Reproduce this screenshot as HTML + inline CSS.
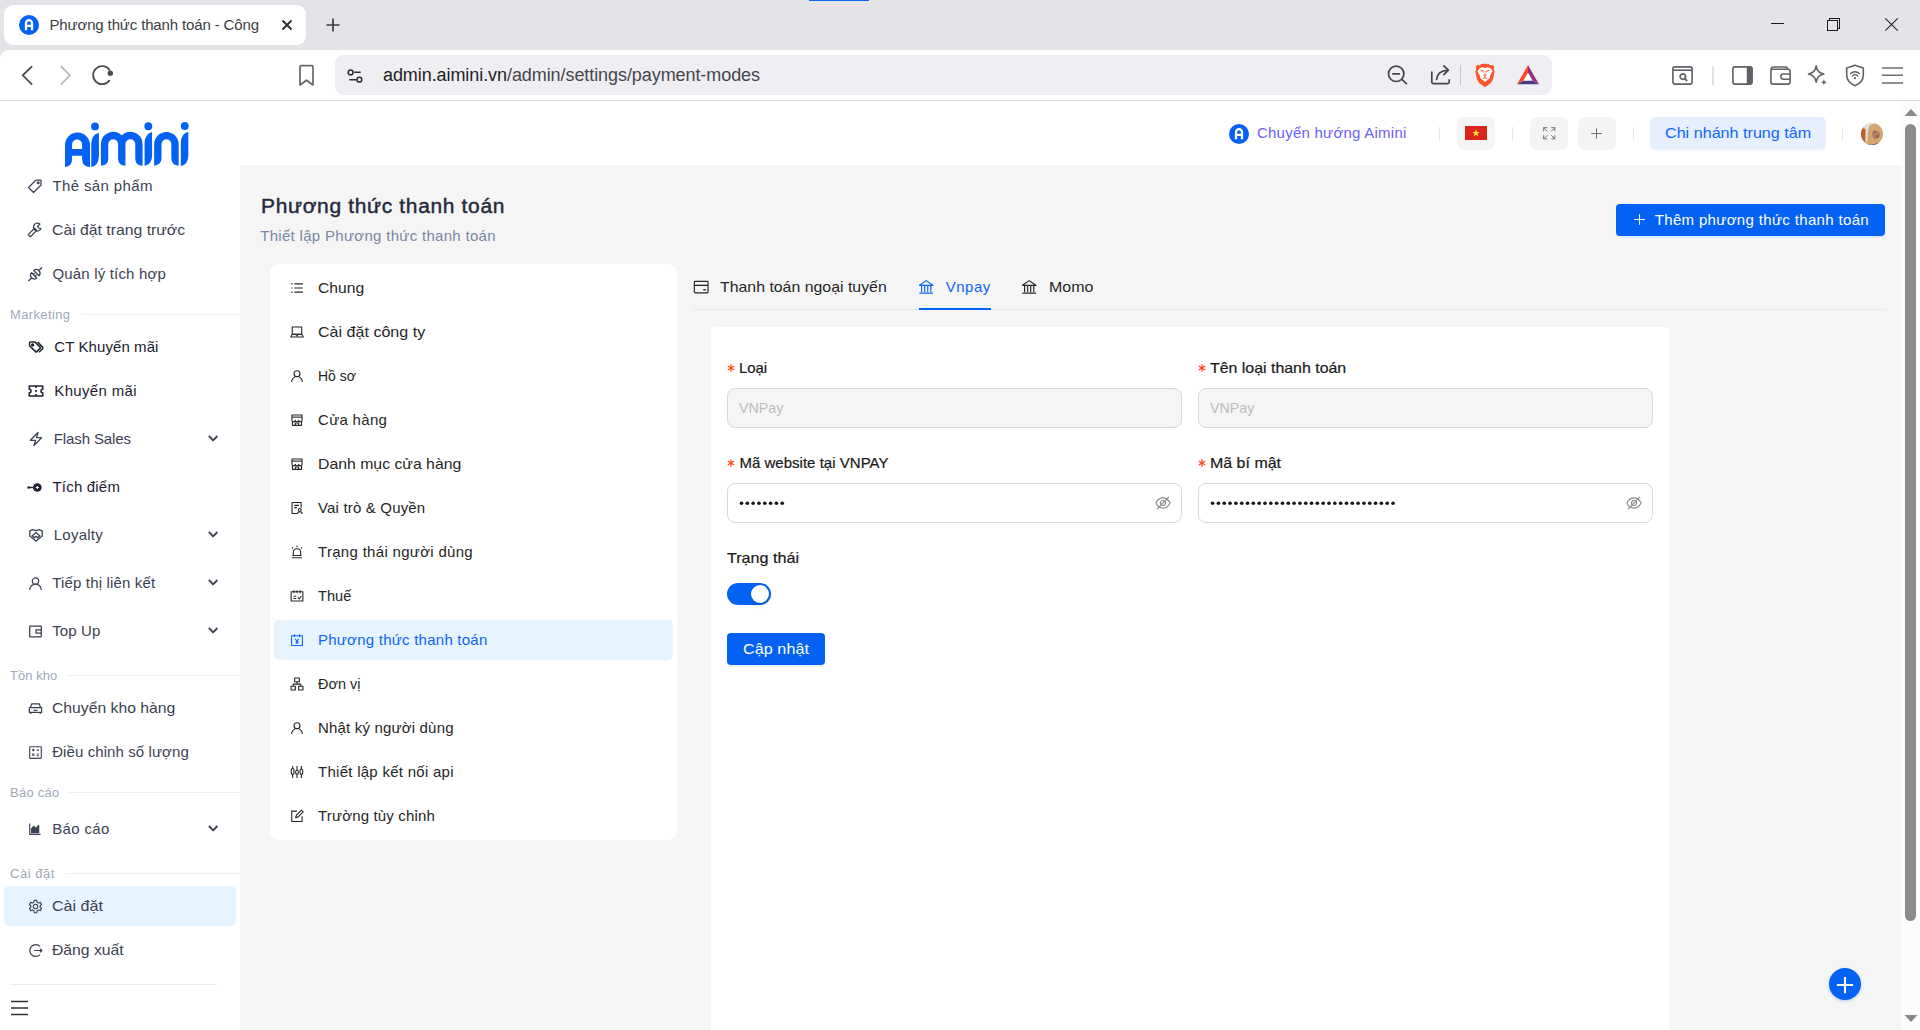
<!DOCTYPE html>
<html lang="vi">
<head>
<meta charset="utf-8">
<title>Phương thức thanh toán</title>
<style>
*{box-sizing:border-box;margin:0;padding:0}
html,body{width:1920px;height:1030px;overflow:hidden;background:#fff}
body{font-family:"Liberation Sans",sans-serif;color:#222;position:relative}
.abs{position:absolute}
.t{position:absolute;white-space:nowrap;line-height:1;transform-origin:0 50%}
svg{position:absolute;overflow:visible}
/* browser chrome */
#tabbar{left:0;top:0;width:1920px;height:62px;background:#e3e3e8}
#tab{left:4px;top:5px;width:302px;height:40px;background:#fff;border-radius:9px}
#toolbar{left:0;top:50px;width:1920px;height:50px;background:#fff;border-radius:9px 0 0 0}
#urlbar{left:335px;top:55px;width:1217px;height:40px;background:#eeeef3;border-radius:9px}
#chromeline{left:0;top:100px;width:1920px;height:1px;background:#dedee3}
/* page */
#sidebar{left:0;top:101px;width:240px;height:929px;background:#fff}
#header{left:240px;top:101px;width:1661px;height:64px;background:#fff}
#main{left:240px;top:165px;width:1661px;height:865px;background:#f5f5f5}
#scroll{left:1901px;top:101px;width:19px;height:929px;background:#fcfcfc}
#thumb{left:1905px;top:124px;width:11px;height:797px;background:#8b8b8b;border-radius:6px}
.sb{font-size:15px;color:#3d4350}
.sec{font-size:13px;color:#9aa1ad}
.secline{height:1px;background:#eeeff2}
.st{font-size:15px;color:#2a2a2a}
.lbl{font-size:15px;color:#1f1f1f}
.inp{position:absolute;height:40px;width:455px;border:1px solid #d9d9d9;border-radius:8px;background:#fff}
.inp.dis{background:#f5f5f5}
</style>
</head>
<body>
<!-- ======= BROWSER CHROME ======= -->
<div class="abs" id="tabbar"></div>
<div class="abs" id="tab"></div>
<div class="abs" id="toolbar"></div>
<div class="abs" id="urlbar"></div>
<div class="abs" id="chromeline"></div>
<div class="abs" style="left:809px;top:0;width:60px;height:1px;background:#0a6af0"></div>
<div class="abs" style="left:19px;top:15px;width:20px;height:20px;background:#0362f4;border-radius:50%"></div>
<svg style="left:19px;top:15px;width:20px;height:20px" viewBox="0 0 20 20" ><path d="M7 15.200V8.200a3 3 0 0 1 6 0v7M7 10.900h6" fill="none" stroke="#fff" stroke-width="2.300"/></svg>
<div class="abs" style="left:246px;top:10px;width:20px;height:30px;background:linear-gradient(90deg,rgba(255,255,255,0),#fff 75%);"></div>
<svg style="left:280px;top:18px;width:14px;height:14px" viewBox="0 0 14 14" ><path d="M2.500 2.500l9 9M11.500 2.500l-9 9" stroke="#2e2e33" stroke-width="1.900" fill="none"/></svg>
<svg style="left:325px;top:17px;width:16px;height:16px" viewBox="0 0 16 16" ><path d="M8 1.500v13M1.500 8h13" stroke="#3c3c42" stroke-width="1.700" fill="none"/></svg>
<svg style="left:1770px;top:16px;width:16px;height:16px" viewBox="0 0 16 16" ><path d="M1 7.500h13" stroke="#1c1c1c" stroke-width="1" fill="none" shape-rendering="crispEdges"/></svg>
<svg style="left:1826px;top:17px;width:15px;height:15px" viewBox="0 0 15 15" ><g stroke="#1c1c1c" stroke-width="1" fill="none" shape-rendering="crispEdges"><rect x="1.500" y="3.500" width="10" height="10"/><path d="M3.500 3.500V1.500h10v10h-2"/></g></svg>
<svg style="left:1884px;top:17px;width:15px;height:15px" viewBox="0 0 15 15" ><path d="M1.300 1.300l12.400 12.400M13.700 1.300 1.300 13.700" stroke="#2a2530" stroke-width="1.150" fill="none"/></svg>
<svg style="left:18px;top:63px;width:20px;height:24px" viewBox="0 0 20 24" ><path d="M13.600 3.600 4.800 12.300l8.800 8.800" stroke="#4b4c53" stroke-width="1.800" fill="none" stroke-linecap="round"/></svg>
<svg style="left:56px;top:63px;width:20px;height:24px" viewBox="0 0 20 24" ><path d="M5.300 3.600l8.700 8.700-8.700 8.800" stroke="#b9b3b6" stroke-width="1.600" fill="none" stroke-linecap="round"/></svg>
<svg style="left:90px;top:63px;width:24px;height:24px" viewBox="0 0 24 24" ><path d="M19.300 17.600A9 9 0 1 1 19.500 7" stroke="#4b4c53" stroke-width="1.800" fill="none" stroke-linecap="round"/><circle cx="20.300" cy="10.200" r="2.700" fill="#4b4c53"/></svg>
<svg style="left:298px;top:64px;width:17px;height:23px" viewBox="0 0 17 23" ><path d="M2 2.700a1 1 0 0 1 1-1h11a1 1 0 0 1 1 1v18.300l-6.500-4.800L2 21z" stroke="#66676d" stroke-width="1.700" fill="none" stroke-linejoin="round"/></svg>
<svg style="left:344px;top:66px;width:20px;height:18px" viewBox="0 0 20 18" ><g stroke="#2b2b30" stroke-width="1.500" fill="none"><circle cx="6.600" cy="6.400" r="2.400"/><path d="M10.300 6.300h6.400M5.300 13.700h7.200"/><circle cx="15.400" cy="13.700" r="2.400"/></g></svg>
<svg style="left:1384px;top:62px;width:26px;height:26px" viewBox="0 0 26 26" ><g stroke="#45464d" stroke-width="1.700" fill="none" stroke-linecap="round"><circle cx="12.200" cy="11.800" r="7.700"/><path d="M17.800 17.400l4.600 4.200M8.800 11.800h6.600"/></g></svg>
<svg style="left:1428px;top:62px;width:26px;height:26px" viewBox="0 0 26 26" ><g stroke="#45464d" stroke-width="1.700" fill="none" stroke-linecap="round" stroke-linejoin="round"><path d="M3.800 10v10a1.600 1.600 0 0 0 1.600 1.600h14.200a1.600 1.600 0 0 0 1.600-1.600v-2.200"/><path d="M8.600 17.500c.4-5.500 4-8.800 11.200-9.300M15.800 3.800l4.600 4.400-4.600 4.500"/></g></svg>
<div class="abs" style="left:1460px;top:65px;width:1.3px;height:20px;background:#c9c5c6;"></div>
<svg style="left:1474px;top:63px;width:22px;height:25px" viewBox="0 0 22 25" ><path d="M11 .8l3.500.2 1.700 1.300 2.700-.3 1.400 2.200-.6 1.900.9 2.600-1.500 7.400-2.200 3.900-5.900 4.200-5.900-4.200-2.200-3.900L1.400 8.700l.9-2.600-.6-1.900L3.100 2l2.700.3L7.500 1z" fill="#fb542b"/><path d="M5.800 5.100l2.700-.9 2.500.7 2.500-.7 2.700.9 2.500 3.200-2.500 4.200-.3 2.500-4.900 4.100-4.900-4.100-.3-2.500-2.500-4.200z" fill="#fff"/><path d="M10.200 10.500v2.400l.8.700.8-.7v-2.400M8.800 15.700l2.200-1.100 2.200 1.100" stroke="#fb542b" stroke-width="1" fill="none"/><path d="M6.600 7.200l3.200 1 .4 1.200M15.400 7.200l-3.200 1-.4 1.200" stroke="#fb542b" stroke-width="1" fill="none"/></svg>
<svg style="left:1516px;top:64px;width:24px;height:21px" viewBox="0 0 24 21" ><path d="M12 1 1 20.300h22z" fill="#fff"/><path d="M12 1 1 20.300l6.300-3.500L12 8.500z" fill="#ff4724"/><path d="M12 1l11 19.300-6.300-3.500L12 8.500z" fill="#95307c"/><path d="M1 20.300h22l-6.300-3.500H7.300z" fill="#4b3a7e"/></svg>
<svg style="left:1672px;top:66px;width:21px;height:19px" viewBox="0 0 21 19" ><g stroke="#606067" stroke-width="1.600" fill="none"><rect x=".9" y=".9" width="19.200" height="17.200" rx="2"/><path d="M1 4.200h19"/><circle cx="10.800" cy="10.600" r="2.700" stroke-width="1.700"/><path d="M12.800 12.600l2.400 2.400" stroke-width="1.900"/></g></svg>
<div class="abs" style="left:1711.5px;top:66px;width:2px;height:19px;background:#e2e2e7;"></div>
<svg style="left:1732px;top:66px;width:21px;height:19px" viewBox="0 0 21 19" ><rect x=".9" y=".9" width="19.200" height="17.200" rx="2" stroke="#606067" stroke-width="1.600" fill="none"/><path d="M14.800 1h4.200a1.200 1.200 0 0 1 1.200 1.200v14.600a1.200 1.200 0 0 1-1.200 1.200h-4.200z" fill="#606067"/></svg>
<svg style="left:1770px;top:66px;width:21px;height:19px" viewBox="0 0 21 19" ><g stroke="#606067" stroke-width="1.600" fill="none" stroke-linejoin="round"><path d="M1 3.600A2.600 2.600 0 0 1 3.600 1h11.800a2.200 2.200 0 0 1 2.200 2.200"/><rect x=".9" y="3.300" width="19.200" height="14.800" rx="2.200"/><path d="M20 8h-6.600a2.600 2.600 0 0 0 0 5.200H20"/></g></svg>
<svg style="left:1806px;top:64px;width:23px;height:23px" viewBox="0 0 23 23" ><path d="M10.200 1.800c.5 4.500 2.600 7.200 7.600 8.200-5 .9-7.100 3.500-7.600 8.200-.6-4.700-2.700-7.300-7.700-8.200 5-1 7.100-3.700 7.700-8.200z" stroke="#606067" stroke-width="1.600" fill="none" stroke-linejoin="round"/><path d="M17.900 15c.25 1.900 1.100 2.900 3.100 3.300-2 .4-2.850 1.400-3.100 3.300-.25-1.900-1.100-2.900-3.100-3.300 2-.4 2.850-1.400 3.100-3.300z" fill="#606067"/></svg>
<svg style="left:1845px;top:64px;width:20px;height:23px" viewBox="0 0 20 23" ><g stroke="#606067" fill="none"><path d="M10 1.200l8.300 2.900v6.800c0 5-3.400 8.600-8.300 10.800C5.100 19.500 1.700 15.900 1.700 10.900V4.100z" stroke-width="1.600" stroke-linejoin="round"/><path d="M5.600 9.600a6.300 6.300 0 0 1 8.800 0M7.300 11.900a3.900 3.900 0 0 1 5.400 0" stroke-width="1.400" stroke-linecap="round"/></g><circle cx="10" cy="14.200" r="1.100" fill="#606067"/></svg>
<svg style="left:1882px;top:66px;width:21px;height:19px" viewBox="0 0 21 19" ><path d="M0 1.900h21M0 9.300h21M0 17h21" stroke="#6d6d72" stroke-width="1.500" fill="none"/></svg>

<!-- ======= PAGE ======= -->
<div class="abs" id="sidebar"></div>
<div class="abs" id="header"></div>
<div class="abs" id="main"></div>
<div class="abs" id="scroll"></div>
<div class="abs" id="thumb"></div>
<svg style="left:50px;top:110px;width:160px;height:70px" viewBox="0 0 1920 840" ><path fill-rule="evenodd" fill="#0362f4" d="M180,685 L180,420 A150,150 0 0 1 480,420 L480,685 Q390,680 385,590 L385,548 L265,548 L265,590 Q265,675 180,685 Z M265,468 L265,415 A60,60 0 0 1 385,415 L385,468 Z M587,275 L587,560 Q580,670 495,685 L495,400 Q500,290 587,275 Z M611,670 L611,410 A147,147 0 0 1 861,305 A147,147 0 0 1 1111,410 L1111,670 Q1025,665 1023,585 L1023,410 A59,59 0 0 0 905,410 L905,670 Q819,665 817,585 L817,410 A59,59 0 0 0 699,410 L699,585 Q699,660 611,670 Z M1225,265 L1225,555 Q1218,658 1135,670 L1135,395 Q1140,282 1225,265 Z M1250,668 L1250,410 A147,147 0 0 1 1544,410 L1544,668 Q1458,663 1456,583 L1456,410 A59,59 0 0 0 1338,410 L1338,583 Q1338,658 1250,668 Z M1660,262 L1660,555 Q1653,660 1570,672 L1570,395 Q1575,280 1660,262 Z"/><circle cx="540" cy="197" r="47" fill="#0362f4"/><circle cx="1180" cy="195" r="47" fill="#0362f4"/><circle cx="1617" cy="192" r="47" fill="#0362f4"/></svg>
<div class="abs" style="left:4px;top:886px;width:232px;height:40px;background:#e6f4ff;border-radius:5px"></div>
<svg style="left:27.20px;top:177.80px;width:16px;height:16px;color:#3b4252" viewBox="0 0 16 16" fill="none" stroke="currentColor" stroke-width="1.25" stroke-linejoin="round" ><path d="M1.500 9.500 9 2h5v5l-7.500 7.500z"/><circle cx="11.200" cy="4.800" r=".9"/></svg>
<svg style="left:27.20px;top:222.00px;width:16px;height:16px;color:#3b4252" viewBox="0 0 16 16" fill="none" stroke="currentColor" stroke-width="1.25" stroke-linejoin="round" ><path d="M1.200 12.600 7.600 6.200l2.200 2.200-6.400 6.400z"/><path d="M12.900 2.100A3.900 3.900 0 1 0 14 6.600l-2.500-.6-.9-1.700z"/></svg>
<svg style="left:26.95px;top:265.75px;width:16.5px;height:16.5px;color:#3b4252" viewBox="0 0 16 16" fill="none" stroke="currentColor" stroke-width="1.3" stroke-linejoin="round" ><path d="M6.600 4.400l5 5a3.540 3.540 0 0 0-5-5zM4.400 6.600l5 5a3.540 3.540 0 0 1-5-5zM11.300 4.700l3.200-3.200M4.700 11.300l-3.200 3.200M6 8.200l1.300-1.300M7.800 10l1.300-1.300"/></svg>
<svg style="left:27.60px;top:339.00px;width:16px;height:16px;color:#1d2230" viewBox="0 0 16 16" fill="none" stroke="currentColor" stroke-width="1.5" stroke-linejoin="round" ><path d="M1.500 3.800q0-.8.800-.8h4.200q.5 0 .9.400l4.700 4.700q.6.600 0 1.200l-3.300 3.300q-.6.600-1.200 0L2 7.300q-.5-.4-.5-1z"/><circle cx="4.600" cy="6" r=".9"/><path d="M9.800 3l4.900 5.300q.5.600 0 1.100l-3.700 3.900"/></svg>
<svg style="left:27.60px;top:383.00px;width:16px;height:16px;color:#1d2230" viewBox="0 0 16 16" fill="none" stroke="currentColor" stroke-width="1.6" stroke-linejoin="round" ><path d="M1.300 3h13.400v3.300a1.700 1.700 0 0 0 0 3.400V13H1.300V9.700a1.700 1.700 0 0 0 0-3.400z"/><path d="M8 3v2M8 7v2M8 11v2"/></svg>
<svg style="left:27.60px;top:431.00px;width:16px;height:16px;color:#3b4252" viewBox="0 0 16 16" fill="none" stroke="currentColor" stroke-width="1.3" stroke-linejoin="round" ><path d="M10 1.500 2.400 9.300h5.100l-1.400 5.200 7.500-7.900H8.500z"/></svg>
<svg style="left:27.30px;top:479.50px;width:15px;height:15px;color:#1d2230" viewBox="0 0 16 16" fill="none" stroke="currentColor" stroke-width="1.3" stroke-linejoin="round" ><circle cx="11" cy="8" r="4.600" fill="currentColor" stroke="none"/><path d="M11 6.300v3.400M9.300 8h3.400" stroke="#fff" stroke-width="1.100"/><path d="M1.500 8h6" stroke-width="1.400"/><circle cx="1.800" cy="8" r="1.400" fill="currentColor" stroke="none"/></svg>
<svg style="left:27.60px;top:527.00px;width:16px;height:16px;color:#3b4252" viewBox="0 0 16 16" fill="none" stroke="currentColor" stroke-width="1.3" stroke-linejoin="round" ><path d="M1.800 3.800 4.500 2.600l3.500 1 3.500-1 2.700 1.200v5.200L8 14 1.800 9z"/><path d="M4.300 8.800l2 1.900 1.600-1.400 1.600 1.400 2.200-1.900-3.700-3.300-3.700 3.300z"/></svg>
<svg style="left:27.50px;top:575.50px;width:15px;height:15px;color:#3b4252" viewBox="0 0 16 16" fill="none" stroke="currentColor" stroke-width="1.3" stroke-linejoin="round" ><circle cx="8" cy="5.400" r="3.400"/><path d="M1.800 14.800a6.200 6.200 0 0 1 12.400 0"/></svg>
<svg style="left:27.50px;top:623.50px;width:15px;height:15px;color:#3b4252" viewBox="0 0 16 16" fill="none" stroke="currentColor" stroke-width="1.4" stroke-linejoin="round" ><rect x="1.800" y="2.300" width="12.400" height="11.400" rx=".6"/><path d="M14.200 6.300H8.600v3.400h5.600"/></svg>
<svg style="left:27.50px;top:700.50px;width:15px;height:15px;color:#3b4252" viewBox="0 0 16 16" fill="none" stroke="currentColor" stroke-width="1.3" stroke-linejoin="round" ><path d="M2.600 7l1.400-4h8l1.400 4M1.500 7h13v5.200h-13zM3 12.200v1.600M13 12.200v1.600M6 10h4"/></svg>
<svg style="left:27.50px;top:744.50px;width:15px;height:15px;color:#3b4252" viewBox="0 0 16 16" fill="none" stroke="currentColor" stroke-width="1.2" stroke-linejoin="round" ><rect x="1.800" y="1.800" width="12.400" height="12.400" rx=".6"/><path d="M4.300 5.400h2.700M5.650 4.050v2.700M9.300 5.400h2.400M4.600 9.300l2.100 2.100M6.700 9.300l-2.100 2.100M9.300 9.600h2.400M9.300 11.400h2.400"/></svg>
<svg style="left:28.00px;top:822.00px;width:14px;height:14px;color:#3b4252" viewBox="0 0 16 16" fill="none" stroke="currentColor" stroke-width="1.3" stroke-linejoin="round" ><path d="M2 1.800v12.400h12.400"/><path d="M4 12.200V7.800l2.600-2.900 2.400 2.700 3.200-3.900v8.500z" fill="currentColor"/></svg>
<svg style="left:27.50px;top:898.50px;width:15px;height:15px;color:#3b4252" viewBox="0 0 16 16" fill="none" stroke="currentColor" stroke-width="1.2" stroke-linejoin="round" ><circle cx="8" cy="8" r="2.400"/><path d="M6.700 1.400h2.600l.45 2 1.400.8 1.950-.6 1.300 2.250-1.500 1.400v1.500l1.500 1.400-1.300 2.250-1.950-.6-1.400.8-.45 2H6.700l-.45-2-1.400-.8-1.950.6-1.300-2.250 1.500-1.400v-1.500l-1.500-1.400 1.300-2.250 1.950.6 1.400-.8z"/></svg>
<svg style="left:27.50px;top:942.50px;width:15px;height:15px;color:#3b4252" viewBox="0 0 16 16" fill="none" stroke="currentColor" stroke-width="1.3" stroke-linejoin="round" ><path d="M12.800 3.600a6.300 6.300 0 1 0 0 8.800"/><path d="M6.500 8h8.300M12.800 6l2 2-2 2"/></svg>
<svg style="left:206.85px;top:432.05px;width:12.3px;height:12.3px;color:#3a404d" viewBox="0 0 16 16" fill="none" stroke="currentColor" stroke-width="2.5" stroke-linejoin="round" stroke-linejoin="miter"><path d="M2.500 5.200 8 11l5.500-5.800" stroke-width="2.400"/></svg>
<svg style="left:206.85px;top:528.05px;width:12.3px;height:12.3px;color:#3a404d" viewBox="0 0 16 16" fill="none" stroke="currentColor" stroke-width="2.5" stroke-linejoin="round" stroke-linejoin="miter"><path d="M2.500 5.200 8 11l5.500-5.800" stroke-width="2.400"/></svg>
<svg style="left:206.85px;top:576.05px;width:12.3px;height:12.3px;color:#3a404d" viewBox="0 0 16 16" fill="none" stroke="currentColor" stroke-width="2.5" stroke-linejoin="round" stroke-linejoin="miter"><path d="M2.500 5.200 8 11l5.500-5.800" stroke-width="2.400"/></svg>
<svg style="left:206.85px;top:624.05px;width:12.3px;height:12.3px;color:#3a404d" viewBox="0 0 16 16" fill="none" stroke="currentColor" stroke-width="2.5" stroke-linejoin="round" stroke-linejoin="miter"><path d="M2.500 5.200 8 11l5.500-5.800" stroke-width="2.400"/></svg>
<svg style="left:206.85px;top:822.05px;width:12.3px;height:12.3px;color:#3a404d" viewBox="0 0 16 16" fill="none" stroke="currentColor" stroke-width="2.5" stroke-linejoin="round" stroke-linejoin="miter"><path d="M2.500 5.200 8 11l5.500-5.800" stroke-width="2.400"/></svg>
<div class="abs secline" style="left:80.8px;top:314px;width:159.2px"></div>
<div class="abs secline" style="left:67px;top:675px;width:173px"></div>
<div class="abs secline" style="left:69px;top:792px;width:171px"></div>
<div class="abs secline" style="left:64.5px;top:873px;width:175.5px"></div>
<div class="abs" style="left:10px;top:984px;width:207px;height:1px;background:#ececec"></div>
<svg style="left:10.5px;top:1000px;width:17px;height:16px" viewBox="0 0 17 16" ><path d="M0 1.500h17M0 8h17M0 14.500h17" stroke="#333" stroke-width="1.400" fill="none"/></svg>
<div class="abs" style="left:1229px;top:123.5px;width:20px;height:20px;background:#0362f4;border-radius:50%"></div>
<svg style="left:1229px;top:123.5px;width:20px;height:20px" viewBox="0 0 20 20" ><path d="M7 15.200V8.200a3 3 0 0 1 6 0v7M7 10.900h6" fill="none" stroke="#fff" stroke-width="2.300"/></svg>
<div class="abs" style="left:1439px;top:127px;width:1px;height:13px;background:#e6e6e6;"></div>
<div class="abs" style="left:1512px;top:127px;width:1px;height:13px;background:#e6e6e6;"></div>
<div class="abs" style="left:1633px;top:127px;width:1px;height:13px;background:#e6e6e6;"></div>
<div class="abs" style="left:1842px;top:127px;width:1px;height:13px;background:#e6e6e6;"></div>
<div class="abs" style="left:1457px;top:117px;width:38px;height:33px;background:#f4f4f4;border-radius:7px"></div>
<div class="abs" style="left:1465px;top:126px;width:22px;height:14px;background:#da251d;"></div>
<svg style="left:1465px;top:126px;width:22px;height:14px" viewBox="0 0 22 14" ><path d="M11 3.200l.95 2.700h2.850l-2.300 1.700.87 2.750L11 8.700l-2.370 1.650.87-2.750-2.300-1.700h2.850z" fill="#ffec2e"/></svg>
<div class="abs" style="left:1530px;top:117px;width:38px;height:33px;background:#f4f4f4;border-radius:7px"></div>
<svg style="left:1541.55px;top:126.15px;width:14.5px;height:14.5px;color:#737373" viewBox="0 0 16 16" fill="none" stroke="currentColor" stroke-width="1.1" stroke-linejoin="round" ><path d="M1.800 5.800v-4h4M1.800 1.800l4 4M10.200 1.800h4v4M14.200 1.800l-4 4M1.800 10.200v4h4M1.800 14.200l4-4M14.200 10.200v4h-4M14.200 14.200l-4-4"/></svg>
<div class="abs" style="left:1578px;top:117px;width:38px;height:33px;background:#f4f4f4;border-radius:7px"></div>
<svg style="left:1590.20px;top:127.00px;width:13px;height:13px;color:#6a6a6a" viewBox="0 0 16 16" fill="none" stroke="currentColor" stroke-width="1.2" stroke-linejoin="round" ><path d="M8 1.500v13M1.500 8h13"/></svg>
<div class="abs" style="left:1650px;top:117px;width:176px;height:32px;background:#e6effe;border-radius:5px;box-shadow:0 2px 0 rgba(5,145,255,.06)"></div>
<svg style="left:1861px;top:123px;width:22px;height:22px" viewBox="0 0 22 22" ><defs><clipPath id="av"><circle cx="11" cy="11" r="11"/></clipPath></defs><g clip-path="url(#av)"><rect width="22" height="22" fill="#d3a56f"/><path d="M0 0h15l-6.500 2.500-1.700 6-.4 9.500-2 .6V6z" fill="#e4e2e1"/><path d="M0 5l4.400 1.200-.2 12-4.200 2z" fill="#b7622c"/><circle cx="15" cy="11.500" r="3.900" fill="#9a6a5a" opacity=".6"/><circle cx="13.500" cy="9" r="1.500" fill="#7c4b52" opacity=".6"/><circle cx="16.500" cy="13.500" r="1.400" fill="#6d4350" opacity=".6"/><circle cx="14" cy="15" r="1.100" fill="#7c4b52" opacity=".5"/><path d="M0 18.500q9 5.500 17 1.500l5-2v4H0z" fill="#4a2a2a"/></g></svg>
<svg style="left:1903.5px;top:108px;width:14px;height:9px" viewBox="0 0 14 9" ><path d="M7 1 .5 8h13z" fill="#8a8a8a"/></svg>
<svg style="left:1903.8px;top:1014px;width:14px;height:9px" viewBox="0 0 14 9" ><path d="M7 8 .5 1h13z" fill="#8a8a8a"/></svg>
<div class="abs" style="left:1616px;top:204px;width:269px;height:32px;background:#0362f4;border-radius:4px;box-shadow:0 2px 0 rgba(5,145,255,.1)"></div>
<svg style="left:1632.50px;top:213.00px;width:13px;height:13px;color:#fff" viewBox="0 0 16 16" fill="none" stroke="currentColor" stroke-width="1.3" stroke-linejoin="round" ><path d="M8 1.500v13M1.500 8h13"/></svg>
<div class="abs" style="left:270px;top:264px;width:407px;height:576px;background:#fff;border-radius:9px"></div>
<div class="abs" style="left:274px;top:620px;width:399px;height:40px;background:#e6f4ff;border-radius:5px"></div>
<svg style="left:290.00px;top:281.00px;width:14px;height:14px;color:#262626" viewBox="0 0 16 16" fill="none" stroke="currentColor" stroke-width="1.25" stroke-linejoin="round" ><path d="M5 3.300h9.700M5 8h9.700M5 12.700h9.700M1.300 3.300h1.700M1.300 8h1.700M1.300 12.700h1.700"/></svg>
<svg style="left:290.00px;top:325.00px;width:14px;height:14px;color:#262626" viewBox="0 0 16 16" fill="none" stroke="currentColor" stroke-width="1.25" stroke-linejoin="round" ><rect x="2.600" y="2.300" width="10.800" height="8.200"/><path d="M.8 13.800h14.400l-1.800-3.300H2.600z"/><path d="M6.500 12.300h3"/></svg>
<svg style="left:290.00px;top:369.00px;width:14px;height:14px;color:#262626" viewBox="0 0 16 16" fill="none" stroke="currentColor" stroke-width="1.25" stroke-linejoin="round" ><circle cx="8" cy="5.400" r="3.400"/><path d="M1.800 14.800a6.200 6.200 0 0 1 12.400 0"/></svg>
<svg style="left:290.00px;top:413.00px;width:14px;height:14px;color:#262626" viewBox="0 0 16 16" fill="none" stroke="currentColor" stroke-width="1.25" stroke-linejoin="round" ><path d="M2.200 2.300h11.600v5.900a1.930 1.930 0 0 1-3.870 0 1.930 1.930 0 0 1-3.860 0 1.930 1.930 0 0 1-3.870 0z"/><path d="M2.200 4.700h11.600"/><path d="M2.800 9.800v4.300h10.400V9.800M6.200 14.100v-2.700h3.600v2.700"/></svg>
<svg style="left:290.00px;top:457.00px;width:14px;height:14px;color:#262626" viewBox="0 0 16 16" fill="none" stroke="currentColor" stroke-width="1.25" stroke-linejoin="round" ><path d="M2.200 2.300h11.600v5.900a1.930 1.930 0 0 1-3.870 0 1.930 1.930 0 0 1-3.860 0 1.930 1.930 0 0 1-3.870 0z"/><path d="M2.200 4.700h11.600"/><path d="M2.800 9.800v4.300h10.400V9.800M6.200 14.100v-2.700h3.600v2.700"/></svg>
<svg style="left:290.00px;top:501.00px;width:14px;height:14px;color:#262626" viewBox="0 0 16 16" fill="none" stroke="currentColor" stroke-width="1.25" stroke-linejoin="round" ><path d="M8 14.200H2.300V1.800h10.400v6"/><path d="M4.800 5h5.400M4.800 7.600h3.200"/><circle cx="11.200" cy="10.200" r="1.600"/><path d="M8.600 14.800a2.600 2.600 0 0 1 5.200 0"/></svg>
<svg style="left:290.00px;top:545.00px;width:14px;height:14px;color:#262626" viewBox="0 0 16 16" fill="none" stroke="currentColor" stroke-width="1.25" stroke-linejoin="round" ><path d="M3.800 12V8.400a4.200 4.200 0 0 1 8.400 0V12M2.300 14.600h11.400M2.800 12h10.400M8 .8v1.700M2.300 2.800l1.100 1.100M13.700 2.800l-1.100 1.100"/></svg>
<svg style="left:290.00px;top:589.00px;width:14px;height:14px;color:#262626" viewBox="0 0 16 16" fill="none" stroke="currentColor" stroke-width="1.25" stroke-linejoin="round" ><rect x="1.300" y="3.200" width="13.400" height="10.600"/><path d="M4.400 1.400v3.400M8 1.400v3.400M11.600 1.400v3.400M3.800 8.200h3.400M3.800 10.800h3.400M9 9.700l1.500 1.500 2.500-3.200"/></svg>
<svg style="left:290.00px;top:633.00px;width:14px;height:14px;color:#0d64f6" viewBox="0 0 16 16" fill="none" stroke="currentColor" stroke-width="1.25" stroke-linejoin="round" ><rect x="1.800" y="3.200" width="12.400" height="11"/><path d="M5 1.400v3.400M11 1.400v3.400M6 6.800l2 2.600 2-2.600M8 9.400v3M6.400 10h3.200M6.400 11.500h3.200"/></svg>
<svg style="left:290.00px;top:677.00px;width:14px;height:14px;color:#262626" viewBox="0 0 16 16" fill="none" stroke="currentColor" stroke-width="1.25" stroke-linejoin="round" ><rect x="5.300" y="1.200" width="5.400" height="4.300"/><rect x="1.200" y="10.500" width="4.900" height="4.300"/><rect x="9.900" y="10.500" width="4.900" height="4.300"/><path d="M8 5.500v2.600M3.650 10.500V8.100h8.700v2.400"/></svg>
<svg style="left:290.00px;top:721.00px;width:14px;height:14px;color:#262626" viewBox="0 0 16 16" fill="none" stroke="currentColor" stroke-width="1.25" stroke-linejoin="round" ><circle cx="8" cy="5.400" r="3.400"/><path d="M1.800 14.800a6.200 6.200 0 0 1 12.400 0"/></svg>
<svg style="left:290.00px;top:765.00px;width:14px;height:14px;color:#262626" viewBox="0 0 16 16" fill="none" stroke="currentColor" stroke-width="1.25" stroke-linejoin="round" ><path d="M3 1.200v13.600M8 1.200v13.600M13 1.200v13.600"/><rect x="1.500" y="4" width="3" height="6.500" rx="1.500" fill="#fff"/><rect x="6.500" y="6" width="3" height="4.500" rx="1.500" fill="#fff"/><rect x="11.500" y="4.500" width="3" height="6" rx="1.500" fill="#fff"/></svg>
<svg style="left:290.00px;top:809.00px;width:14px;height:14px;color:#262626" viewBox="0 0 16 16" fill="none" stroke="currentColor" stroke-width="1.25" stroke-linejoin="round" ><path d="M13.800 8.300v5.900H2V2.400h6"/><path d="M6.400 9.900l.9-3 5.700-5.700 2.100 2.100-5.700 5.700z"/></svg>
<div class="abs" style="left:693px;top:309px;width:1192px;height:1px;background:#e8e8e8;"></div>
<div class="abs" style="left:919px;top:308px;width:71.5px;height:2px;background:#0362f4;"></div>
<svg style="left:692.80px;top:278.80px;width:16.4px;height:16.4px;color:#262626" viewBox="0 0 16 16" fill="none" stroke="currentColor" stroke-width="1.15" stroke-linejoin="round" ><rect x="1.300" y="2.400" width="13.400" height="11.200" rx=".8"/><path d="M1.300 6.200h13.400" stroke-width="1.300"/><path d="M10 10.500h2.800" stroke-width="1.300"/></svg>
<svg style="left:917.80px;top:279.10px;width:16.4px;height:16.4px;color:#0d64f6" viewBox="0 0 16 16" fill="none" stroke="currentColor" stroke-width="1.15" stroke-linejoin="round" ><path d="M1.500 6.200 8 1.600l6.500 4.600zM3.500 6.800v5.800M6.500 6.800v5.800M9.500 6.800v5.800M12.500 6.800v5.800M1.300 13.800h13.400"/></svg>
<svg style="left:1020.80px;top:279.10px;width:16.4px;height:16.4px;color:#262626" viewBox="0 0 16 16" fill="none" stroke="currentColor" stroke-width="1.15" stroke-linejoin="round" ><path d="M1.500 6.200 8 1.600l6.500 4.600zM3.500 6.800v5.800M6.500 6.800v5.800M9.500 6.800v5.800M12.500 6.800v5.800M1.300 13.800h13.400"/></svg>
<div class="abs" style="left:711px;top:327px;width:958px;height:703px;background:#fff;border-radius:4px 4px 0 0"></div>
<div class="inp dis" style="left:727px;top:388px"></div>
<div class="inp dis" style="left:1198px;top:388px"></div>
<div class="inp" style="left:727px;top:483px"></div>
<div class="inp" style="left:1198px;top:483px"></div>
<svg style="left:726.6px;top:364px;width:8px;height:8px" viewBox="0 0 8 8" ><path d="M4 .3v7.400M.8 2.100l6.400 3.800M7.200 2.100.8 5.900" stroke="#ff4319" stroke-width="1.200" fill="none"/></svg>
<svg style="left:1197.6px;top:364px;width:8px;height:8px" viewBox="0 0 8 8" ><path d="M4 .3v7.400M.8 2.100l6.400 3.800M7.200 2.100.8 5.900" stroke="#ff4319" stroke-width="1.200" fill="none"/></svg>
<svg style="left:726.6px;top:459px;width:8px;height:8px" viewBox="0 0 8 8" ><path d="M4 .3v7.400M.8 2.100l6.400 3.800M7.200 2.100.8 5.900" stroke="#ff4319" stroke-width="1.200" fill="none"/></svg>
<svg style="left:1197.6px;top:459px;width:8px;height:8px" viewBox="0 0 8 8" ><path d="M4 .3v7.400M.8 2.100l6.400 3.800M7.200 2.100.8 5.900" stroke="#ff4319" stroke-width="1.200" fill="none"/></svg>
<svg style="left:0px;top:0px;width:1920px;height:1030px" viewBox="0 0 1920 1030" style="pointer-events:none"><circle cx="741.50" cy="503.2" r="1.800" fill="#161616"/><circle cx="747.32" cy="503.2" r="1.800" fill="#161616"/><circle cx="753.14" cy="503.2" r="1.800" fill="#161616"/><circle cx="758.96" cy="503.2" r="1.800" fill="#161616"/><circle cx="764.78" cy="503.2" r="1.800" fill="#161616"/><circle cx="770.60" cy="503.2" r="1.800" fill="#161616"/><circle cx="776.42" cy="503.2" r="1.800" fill="#161616"/><circle cx="782.24" cy="503.2" r="1.800" fill="#161616"/></svg>
<svg style="left:0px;top:0px;width:1920px;height:1030px" viewBox="0 0 1920 1030" style="pointer-events:none"><circle cx="1212.60" cy="503.2" r="1.800" fill="#161616"/><circle cx="1218.42" cy="503.2" r="1.800" fill="#161616"/><circle cx="1224.24" cy="503.2" r="1.800" fill="#161616"/><circle cx="1230.06" cy="503.2" r="1.800" fill="#161616"/><circle cx="1235.88" cy="503.2" r="1.800" fill="#161616"/><circle cx="1241.70" cy="503.2" r="1.800" fill="#161616"/><circle cx="1247.52" cy="503.2" r="1.800" fill="#161616"/><circle cx="1253.34" cy="503.2" r="1.800" fill="#161616"/><circle cx="1259.16" cy="503.2" r="1.800" fill="#161616"/><circle cx="1264.98" cy="503.2" r="1.800" fill="#161616"/><circle cx="1270.80" cy="503.2" r="1.800" fill="#161616"/><circle cx="1276.62" cy="503.2" r="1.800" fill="#161616"/><circle cx="1282.44" cy="503.2" r="1.800" fill="#161616"/><circle cx="1288.26" cy="503.2" r="1.800" fill="#161616"/><circle cx="1294.08" cy="503.2" r="1.800" fill="#161616"/><circle cx="1299.90" cy="503.2" r="1.800" fill="#161616"/><circle cx="1305.72" cy="503.2" r="1.800" fill="#161616"/><circle cx="1311.54" cy="503.2" r="1.800" fill="#161616"/><circle cx="1317.36" cy="503.2" r="1.800" fill="#161616"/><circle cx="1323.18" cy="503.2" r="1.800" fill="#161616"/><circle cx="1329.00" cy="503.2" r="1.800" fill="#161616"/><circle cx="1334.82" cy="503.2" r="1.800" fill="#161616"/><circle cx="1340.64" cy="503.2" r="1.800" fill="#161616"/><circle cx="1346.46" cy="503.2" r="1.800" fill="#161616"/><circle cx="1352.28" cy="503.2" r="1.800" fill="#161616"/><circle cx="1358.10" cy="503.2" r="1.800" fill="#161616"/><circle cx="1363.92" cy="503.2" r="1.800" fill="#161616"/><circle cx="1369.74" cy="503.2" r="1.800" fill="#161616"/><circle cx="1375.56" cy="503.2" r="1.800" fill="#161616"/><circle cx="1381.38" cy="503.2" r="1.800" fill="#161616"/><circle cx="1387.20" cy="503.2" r="1.800" fill="#161616"/><circle cx="1393.02" cy="503.2" r="1.800" fill="#161616"/></svg>
<svg style="left:1155.00px;top:495.00px;width:16px;height:16px;color:#8a8a8a" viewBox="0 0 16 16" fill="none" stroke="currentColor" stroke-width="1.1" stroke-linejoin="round" ><path d="M.9 8S3.400 2.900 8 2.900 15.100 8 15.100 8 12.600 13.100 8 13.100.9 8 .9 8z"/><circle cx="8" cy="8" r="2.500"/><path d="M13.900 1.800 2.100 14.200"/></svg>
<svg style="left:1626.00px;top:495.00px;width:16px;height:16px;color:#8a8a8a" viewBox="0 0 16 16" fill="none" stroke="currentColor" stroke-width="1.1" stroke-linejoin="round" ><path d="M.9 8S3.400 2.900 8 2.900 15.100 8 15.100 8 12.600 13.100 8 13.100.9 8 .9 8z"/><circle cx="8" cy="8" r="2.500"/><path d="M13.900 1.800 2.100 14.200"/></svg>
<div class="abs" style="left:727px;top:583px;width:44px;height:22px;background:#0362f4;border-radius:11px"></div>
<div class="abs" style="left:751px;top:585px;width:18px;height:18px;background:#fff;border-radius:50%;box-shadow:0 2px 4px rgba(0,35,11,.2)"></div>
<div class="abs" style="left:727px;top:633px;width:98px;height:32px;background:#0362f4;border-radius:4px;box-shadow:0 2px 0 rgba(5,145,255,.1)"></div>
<div class="abs" style="left:1829px;top:968px;width:32px;height:32px;background:#0362f4;border-radius:50%;box-shadow:0 1px 3px rgba(5,98,246,.3)"></div>
<svg style="left:1835.00px;top:974.80px;width:20px;height:20px;color:#fff" viewBox="0 0 16 16" fill="none" stroke="currentColor" stroke-width="1.65" stroke-linejoin="round" ><path d="M8 1.500v13M1.500 8h13"/></svg>
<span class="t" id="tabt" style="left:49.50px;top:17.00px;font-size:15px;color:#3b3d45;letter-spacing:-0.139px;">Phương thức thanh toán - Công</span>
<span class="t" id="url" style="left:383.00px;top:66.00px;font-size:18px;color:#1e1e23;letter-spacing:-0.074px;">admin.aimini.vn<span style="color:#46464c">/admin/settings/payment-modes</span></span>
<span class="t" id="s1" style="left:52.40px;top:178.00px;font-size:15px;color:#3b4252;letter-spacing:0.374px;">Thẻ sản phẩm</span>
<span class="t" id="s2" style="left:52.40px;top:222.00px;font-size:15px;color:#3b4252;transform:scaleX(1.0514);">Cài đặt trang trước</span>
<span class="t" id="s3" style="left:52.40px;top:266.00px;font-size:15px;color:#3b4252;letter-spacing:0.184px;">Quản lý tích hợp</span>
<span class="t" id="sec1" style="left:10.40px;top:309.00px;font-size:12px;color:#a0a8b8;letter-spacing:0.391px;transform:scaleX(1.0750);">Marketing</span>
<span class="t" id="s4" style="left:54.30px;top:339.00px;font-size:15px;color:#1d2230;letter-spacing:0.083px;">CT Khuyến mãi</span>
<span class="t" id="s5" style="left:54.30px;top:383.00px;font-size:15px;color:#1d2230;letter-spacing:0.331px;">Khuyến mãi</span>
<span class="t" id="s6" style="left:53.80px;top:431.00px;font-size:15px;color:#3b4252;letter-spacing:-0.117px;">Flash Sales</span>
<span class="t" id="s7" style="left:52.50px;top:479.00px;font-size:15px;color:#1d2230;letter-spacing:0.193px;">Tích điểm</span>
<span class="t" id="s8" style="left:53.80px;top:527.00px;font-size:15px;color:#3b4252;letter-spacing:0.228px;">Loyalty</span>
<span class="t" id="s9" style="left:52.20px;top:575.00px;font-size:15px;color:#3b4252;letter-spacing:0.167px;">Tiếp thị liên kết</span>
<span class="t" id="s10" style="left:52.20px;top:623.00px;font-size:15px;color:#3b4252;letter-spacing:0.134px;">Top Up</span>
<span class="t" id="sec2" style="left:10.10px;top:670.00px;font-size:12px;color:#a0a8b8;letter-spacing:0.091px;transform:scaleX(1.0750);">Tồn kho</span>
<span class="t" id="s11" style="left:52.20px;top:700.00px;font-size:15px;color:#3b4252;transform:scaleX(1.0477);">Chuyển kho hàng</span>
<span class="t" id="s12" style="left:52.20px;top:744.00px;font-size:15px;color:#3b4252;letter-spacing:0.091px;">Điều chỉnh số lượng</span>
<span class="t" id="sec3" style="left:10.10px;top:787.00px;font-size:12px;color:#a0a8b8;letter-spacing:0.287px;transform:scaleX(1.0750);">Báo cáo</span>
<span class="t" id="s13" style="left:52.20px;top:821.00px;font-size:15px;color:#3b4252;letter-spacing:0.342px;">Báo cáo</span>
<span class="t" id="sec4" style="left:10.10px;top:868.00px;font-size:12px;color:#a0a8b8;letter-spacing:0.530px;transform:scaleX(1.0750);">Cài đặt</span>
<span class="t" id="s14" style="left:52.20px;top:898.00px;font-size:15px;color:#3b4252;transform:scaleX(1.0730);">Cài đặt</span>
<span class="t" id="s15" style="left:52.20px;top:942.00px;font-size:15px;color:#3b4252;transform:scaleX(1.0484);">Đăng xuất</span>
<span class="t" id="h1" style="left:1256.90px;top:125.00px;font-size:15px;color:#6a62f6;letter-spacing:0.252px;">Chuyển hướng Aimini</span>
<span class="t" id="h2" style="left:1664.80px;top:125.00px;font-size:15px;color:#0f66fb;letter-spacing:0.004px;transform:scaleX(1.0750);">Chi nhánh trung tâm</span>
<span class="t" id="title" style="left:260.80px;top:197.25px;font-size:19.5px;color:#25293c;letter-spacing:0.617px;transform:scaleX(1.0750);-webkit-text-stroke:0.42px #25293c;">Phương thức thanh toán</span>
<span class="t" id="sub" style="left:260.20px;top:228.00px;font-size:15px;color:#7a86a3;letter-spacing:0.306px;">Thiết lập Phương thức thanh toán</span>
<span class="t" id="addbtn" style="left:1654.70px;top:212.00px;font-size:15px;color:#fff;letter-spacing:0.344px;">Thêm phương thức thanh toán</span>
<span class="t" id="m1" style="left:318.00px;top:280.00px;font-size:15px;color:#262626;transform:scaleX(1.0452);">Chung</span>
<span class="t" id="m2" style="left:318.00px;top:324.00px;font-size:15px;color:#262626;transform:scaleX(1.0713);">Cài đặt công ty</span>
<span class="t" id="m3" style="left:318.00px;top:368.00px;font-size:15px;color:#262626;transform:scaleX(0.9290);">Hồ sơ</span>
<span class="t" id="m4" style="left:318.00px;top:412.00px;font-size:15px;color:#262626;letter-spacing:0.305px;">Cửa hàng</span>
<span class="t" id="m5" style="left:318.00px;top:456.00px;font-size:15px;color:#262626;transform:scaleX(1.0540);">Danh mục cửa hàng</span>
<span class="t" id="m6" style="left:318.00px;top:500.00px;font-size:15px;color:#262626;letter-spacing:0.173px;">Vai trò &amp; Quyền</span>
<span class="t" id="m7" style="left:318.00px;top:544.00px;font-size:15px;color:#262626;letter-spacing:0.305px;">Trạng thái người dùng</span>
<span class="t" id="m8" style="left:318.00px;top:588.00px;font-size:15px;color:#262626;transform:scaleX(0.9736);">Thuế</span>
<span class="t" id="m9" style="left:318.00px;top:632.00px;font-size:15px;color:#0d64f6;letter-spacing:0.243px;">Phương thức thanh toán</span>
<span class="t" id="m10" style="left:318.00px;top:676.00px;font-size:15px;color:#262626;transform:scaleX(0.9633);">Đơn vị</span>
<span class="t" id="m11" style="left:318.00px;top:720.00px;font-size:15px;color:#262626;letter-spacing:0.179px;">Nhật ký người dùng</span>
<span class="t" id="m12" style="left:318.00px;top:764.00px;font-size:15px;color:#262626;letter-spacing:0.271px;">Thiết lập kết nối api</span>
<span class="t" id="m13" style="left:318.00px;top:808.00px;font-size:15px;color:#262626;letter-spacing:0.162px;">Trường tùy chỉnh</span>
<span class="t" id="tb1" style="left:720.20px;top:279.00px;font-size:15px;color:#262626;transform:scaleX(1.0576);">Thanh toán ngoại tuyến</span>
<span class="t" id="tb2" style="left:945.80px;top:279.00px;font-size:15px;color:#0d64f6;letter-spacing:0.463px;">Vnpay</span>
<span class="t" id="tb3" style="left:1048.60px;top:279.00px;font-size:15px;color:#262626;transform:scaleX(1.0651);">Momo</span>
<span class="t" id="f1" style="left:739.10px;top:360.00px;font-size:15px;color:#1a1a1a;letter-spacing:-0.153px;-webkit-text-stroke:0.22px #1a1a1a;">Loại</span>
<span class="t" id="f2" style="left:1210.40px;top:360.00px;font-size:15px;color:#1a1a1a;transform:scaleX(1.0604);-webkit-text-stroke:0.22px #1a1a1a;">Tên loại thanh toán</span>
<span class="t" id="f3" style="left:739.40px;top:455.00px;font-size:15px;color:#1a1a1a;letter-spacing:0.023px;-webkit-text-stroke:0.22px #1a1a1a;">Mã website tại VNPAY</span>
<span class="t" id="f4" style="left:1210.40px;top:455.00px;font-size:15px;color:#1a1a1a;transform:scaleX(1.0647);-webkit-text-stroke:0.22px #1a1a1a;">Mã bí mật</span>
<span class="t" id="f5" style="left:727.20px;top:550.00px;font-size:15px;color:#1a1a1a;transform:scaleX(1.0749);-webkit-text-stroke:0.22px #1a1a1a;">Trạng thái</span>
<span class="t" id="v1" style="left:739.00px;top:400.00px;font-size:15px;color:#bdbdbd;transform:scaleX(0.9489);">VNPay</span>
<span class="t" id="v2" style="left:1210.00px;top:400.00px;font-size:15px;color:#bdbdbd;transform:scaleX(0.9489);">VNPay</span>
<span class="t" id="upd" style="left:742.70px;top:641.00px;font-size:15px;color:#fff;letter-spacing:0.072px;transform:scaleX(1.0750);">Cập nhật</span>
</body>
</html>
